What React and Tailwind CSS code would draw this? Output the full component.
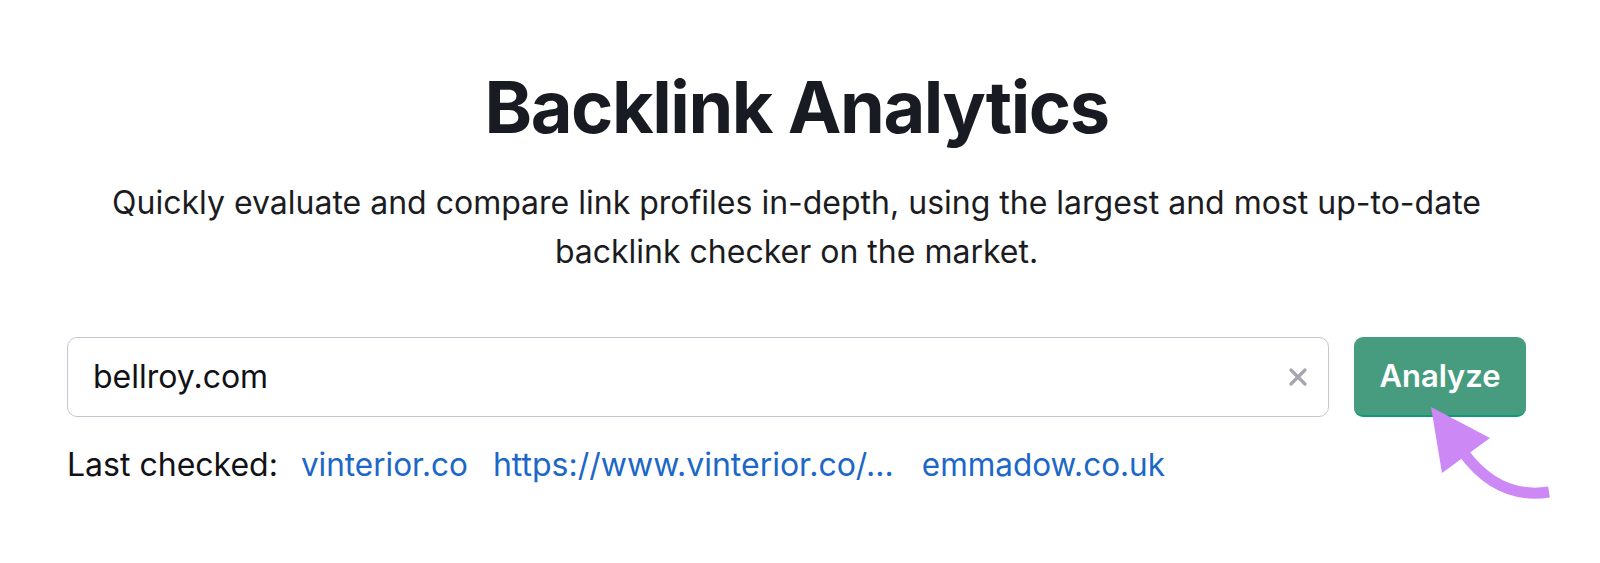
import React from "react";

function ClearIcon() {
  return (
    <svg width="20" height="20" viewBox="0 0 20 20" fill="none">
      <path d="M3 3L17 17M17 3L3 17" stroke="#a5a6ae" strokeWidth="3.2" strokeLinecap="round" />
    </svg>
  );
}

function PointerArrow() {
  return (
    <svg
      className="absolute left-[1418px] top-[400px]"
      width="140"
      height="110"
      viewBox="1420 400 140 110"
      fill="none"
    >
      <path d="M1433 407L1492 438L1444 473Z" fill="#cc88f5" />
      <path d="M1465 452Q1500 500 1551 492" stroke="#cc88f5" strokeWidth="11" />
    </svg>
  );
}

export default function App() {
  return (
    <div
      className="relative min-h-[563px] bg-white flex flex-col items-center pt-[71px] pr-[7px] text-[#191b23]"
      style={{ fontFamily: "Inter, 'Noto Sans', sans-serif" }}
    >
      <h1 className="text-[72px] font-bold leading-none tracking-[-0.02em]">
        Backlink Analytics
      </h1>
      <p className="mt-[35px] w-[1450px] text-center text-[32px] leading-[49px] text-[#1b1c22]">
        Quickly evaluate and compare link profiles in-depth, using the largest and most up-to-date
        <br />
        backlink checker on the market.
      </p>

      <div className="mt-[61px] flex w-[1459px] gap-[25px]">
        <div className="flex h-[80px] flex-1 items-center rounded-[10px] border border-[#c4c7cf] pl-[25px] pr-[20px]">
          <span className="flex-1 text-[32px] leading-[38px] text-[#111216]">bellroy.com</span>
          <ClearIcon />
        </div>
        <button
          type="button"
          className="h-[80px] w-[172px] rounded-[9px] border-b-2 border-[#0f9b79] bg-[#479c7f] text-[31px] font-semibold text-white"
        >
          Analyze
        </button>
      </div>

      <div className="mt-[29px] flex w-[1459px] items-center text-[32px] leading-[38px]">
        <span className="mr-[23px] text-[#111216]">Last checked:</span>
        <div className="flex items-center text-[31.5px] text-[#1c67c8]">
          <a href="#" className="hover:underline">vinterior.co</a>
          <a href="#" className="ml-[25px] text-[32px] hover:underline">https://www.vinterior.co/...</a>
          <a href="#" className="ml-[28px] hover:underline">emmadow.co.uk</a>
        </div>
      </div>

      <PointerArrow />
    </div>
  );
}
